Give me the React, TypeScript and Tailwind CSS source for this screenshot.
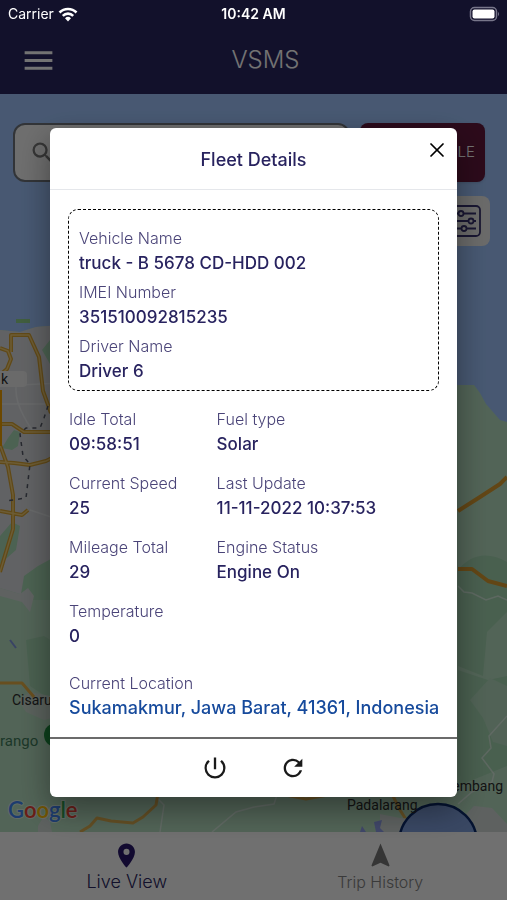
import React from 'react';
import { X } from 'lucide-react';
import { MdLocationOn, MdMenu, MdNavigation, MdPowerSettingsNew, MdRefresh, MdSearch } from 'react-icons/md';

const vehicle = [
  { label: 'Vehicle Name', value: 'truck - B 5678 CD-HDD 002' },
  { label: 'IMEI Number', value: '351510092815235' },
  { label: 'Driver Name', value: 'Driver 6' },
];

const details = [
  { label: 'Idle Total', value: '09:58:51' },
  { label: 'Fuel type', value: 'Solar' },
  { label: 'Current Speed', value: '25' },
  { label: 'Last Update', value: '11-11-2022 10:37:53' },
  { label: 'Mileage Total', value: '29' },
  { label: 'Engine Status', value: 'Engine On' },
  { label: 'Temperature', value: '0' },
];

const Field: React.FC<{ label: string; value: string }> = ({ label, value }) => (
  <div>
    <dt className="text-base leading-6 font-light text-[#4a4478]">{label}</dt>
    <dd className="text-[17px] leading-[26px] font-medium text-[#28235f] whitespace-nowrap">{value}</dd>
  </div>
);

const StatusBar: React.FC = () => (
  <div className="relative z-20 h-7 px-2 grid grid-cols-3 items-center text-sm text-white">
    <div className="flex items-center gap-1">
      <span>Carrier</span>
      <svg width="20" height="15" viewBox="0 0 20 15" fill="none" stroke="#fff" strokeWidth="2.600" aria-label="Wi-Fi">
        <path d="M1.500 5.500a12 12 0 0 1 17 0M4.800 8.800a7.400 7.400 0 0 1 10.400 0" />
        <path d="M10 14.500l-3-3.200a4.300 4.300 0 0 1 6 0z" fill="#fff" stroke="none" />
      </svg>
    </div>
    <span className="text-center font-semibold">10:42 AM</span>
    <svg className="justify-self-end" width="32" height="16" viewBox="0 0 32 16" aria-label="Battery">
      <rect x="3.500" y="1.500" width="26" height="13" rx="4" fill="none" stroke="#77768a" strokeWidth="1.500" />
      <rect x="5.500" y="3.500" width="22" height="9" rx="2" fill="#fff" />
      <path d="M31 6c1.300 .8 1.300 3.200 0 4z" fill="#77768a" />
    </svg>
  </div>
);

const MapView: React.FC = () => (
  <svg
    className="absolute inset-0 w-full h-full"
    viewBox="0 94 507 738"
    preserveAspectRatio="xMidYMid slice"
    fontFamily="Roboto, sans-serif"
  >
    <rect y="94" width="507" height="738" fill="#9fc4fc" />
    {/* land */}
    <path d="M0 330L20 332 36 327 60 325 200 350 440 385 474 385 480 393 486 404 500 420 507 422V832H0z" fill="#b6dec1" />
    <path d="M0 330L20 332 36 327 60 325V560L44 580 32 600 20 594 0 588z" fill="#d8dade" />
    <path d="M42 350l8-10v24zM8 438l6-8 6 2-2 14-6 4-10-2zM0 536l12-14 8 4-4 24-16 14zM24 576l14-10 22-12v46H20z" fill="#a8dab5" />
    <path d="M0 588l20 6 8-6 6 8-4 16-8-10-22-6z" fill="#d2d9d8" />
    <path d="M26 640l18-4 16 10v60l-30-20z" fill="#a5d6b2" />
    <path d="M458 570q20-24 49-8v50l-20 20-4 44-25-10zM458 670l30 10 19-4v90l-49 20z" fill="#a3d4b0" />
    <path d="M470 700l20-22 17 8v60l-14-4-10-24z" fill="#b3dabe" />
    <path d="M18 700l12-8 20 4 10 20-16 4-18-8z" fill="#c8d8cd" />
    <path d="M16 319h14v4h-14z" fill="#8fd08c" />
    {/* minor roads */}
    <g fill="none" stroke="#f3f5f6" strokeWidth="1.500" opacity=".55">
      <path d="M0 386l60-3M0 404h60M20 372c-10 20 0 40 12 58M30 510l30 10M458 586l6 6 8 1 14 7 12-4 9 4M507 716l-18 20 2 12-9 10 12 16-2 8-20 10-14 12" />
      <path d="M156 797l8 8-4 27M212 832l24-20 18-5 20-3 4-12" />
    </g>
    {/* highways */}
    <g fill="none" strokeLinejoin="round">
      <g stroke="#d6a233" strokeWidth="4">
        <path d="M0 348l8 3 3 8-4 10-7 6M11 352V335H29l10 22 4 34 8 22M0 424h12l12 8h36M0 445l8 22 5 28v34L0 572M0 462l14 1 16 2 16-4 14-7M0 511l22 4 6-5" />
      </g>
      <g stroke="#f0cc75" strokeWidth="1.500">
        <path d="M0 348l8 3 3 8-4 10-7 6M11 352V335H29l10 22 4 34 8 22M0 424h12l12 8h36M0 445l8 22 5 28v34L0 572M0 462l14 1 16 2 16-4 14-7M0 511l22 4 6-5" />
      </g>
      <path d="M0 390v56" stroke="#f0a100" strokeWidth="4" />
      <path d="M0 683h22l12 14" stroke="#e5ae45" strokeWidth="3" />
      <path d="M458 511l22-14 20-13 7-7M458 569h14l16 12 19 5" stroke="#d99b30" strokeWidth="4" />
      <path d="M80 832l10-6 7-8 14 3 22 2 10-6 13-12 2-12M280 794l26 5 22-4M390 790l10 20 14 22" stroke="#dcae50" strokeWidth="3" />
      <path d="M48 406l-4 12-4 10-14 0-6 6 3 22 7 8-4 34-20 3" stroke="#555a68" strokeWidth="1.500" strokeDasharray="4 5" />
    </g>
    <path d="M380 814l20 4 28 2 12 12h-60zM460 820l14-14 18 2 15 16v8h-47zM38 826l6-10 6 6 2 10h-14z" fill="#d0d8d5" />
    <path d="M362 826l4 6h-6zM374 822l8-2-2 8 4 4h-8z" fill="#8e9de8" />
    <path d="M10 640l6 8" stroke="#7f95dd" strokeWidth="2" />
    <circle cx="438" cy="843" r="39" fill="#7f9fdc" stroke="#0a2a6c" strokeWidth="2.500" />
    <circle cx="56" cy="735" r="12" fill="#1d8f3f" />
    {/* place names */}
    <rect x="-8" y="371" width="35" height="16" rx="4" fill="#ececec" />
    <g fill="#2c2c2c" fontSize="14">
      <text x="1" y="384">k</text>
      <text x="12" y="705">Cisarua</text>
      <text x="503" y="791" textAnchor="end">Lembang</text>
      <text x="347" y="810">Padalarang</text>
      <text x="0" y="746" fill="#3f7a5a" fontSize="15">rango</text>
    </g>
    <text x="8" y="818" fontSize="22" fontWeight="600" fontFamily="Lato, sans-serif" stroke="#fff" strokeOpacity=".5" strokeWidth="2" paintOrder="stroke">
      <tspan fill="#4285f4">G</tspan>
      <tspan fill="#ea4335">o</tspan>
      <tspan fill="#fbbc05">o</tspan>
      <tspan fill="#4285f4">g</tspan>
      <tspan fill="#34a853">l</tspan>
      <tspan fill="#ea4335">e</tspan>
    </text>
  </svg>
);

const FilterIcon: React.FC = () => (
  <svg width="34" height="32" viewBox="0 0 34 32" fill="none" stroke="#37326f" strokeWidth="1.800">
    <rect x="1" y="1" width="31" height="30" rx="4" />
    <path d="M5 8.500h5M16 8.500h12M5 16h15M26 16h2M5 23.500h8M19 23.500h9" />
    <circle cx="13" cy="8.500" r="2.500" />
    <circle cx="23" cy="16" r="2.500" />
    <circle cx="16" cy="23.500" r="2.500" />
  </svg>
);

const FleetDetails: React.FC = () => (
  <div className="fixed inset-0 z-10 pt-[25px] px-[50px] bg-black/55 flex items-center justify-center">
    <div
      role="dialog"
      aria-labelledby="fleet-title"
      className="w-full max-w-lg rounded-md bg-white shadow-[0_12px_32px_rgba(0,0,0,0.4)]"
    >
      <div className="relative h-[62px] pt-0.5 flex items-center justify-center border-b border-gray-200">
        <h2 id="fleet-title" className="text-lg font-medium text-[#28235f]">Fleet Details</h2>
        <button type="button" aria-label="Close" className="absolute top-[10px] right-2 text-black">
          <X size={24} strokeWidth={1.7} />
        </button>
      </div>

      <div className="px-[18px] pt-[19px] pb-4">
        <dl className="flex flex-col gap-1 px-[10px] pt-4 pb-1.5 border border-dashed border-black rounded-[10px]">
          {vehicle.map((item) => (
            <Field key={item.label} {...item} />
          ))}
        </dl>
        <dl className="mt-4 px-px grid grid-cols-[2fr_3fr] gap-y-[14px]">
          {details.map((item) => (
            <Field key={item.label} {...item} />
          ))}
        </dl>
        <div className="mt-[22px] px-px">
          <p className="text-base leading-6 font-light text-[#4a4478]">Current Location</p>
          <a href="#location" className="block text-lg leading-[26px] font-medium whitespace-nowrap text-[#164a9c]">
            Sukamakmur, Jawa Barat, 41361, Indonesia
          </a>
        </div>
      </div>

      <div className="h-[60px] flex items-center justify-center gap-[50px] border-t-2 border-[#6b6b6b] text-[#1a1a1a]">
        <button type="button" aria-label="Power"><MdPowerSettingsNew size={28} /></button>
        <button type="button" aria-label="Refresh"><MdRefresh size={28} /></button>
      </div>
    </div>
  </div>
);

const App: React.FC = () => {
  return (
    <div className="min-h-screen flex flex-col font-[Inter,sans-serif]">
      <header className="bg-[#28265f]">
        <StatusBar />
        <div className="h-[66px] px-5 pb-0.5 grid grid-cols-[1fr_auto_1fr] items-center text-white">
          <button type="button" aria-label="Menu" className="justify-self-start"><MdMenu size={37} /></button>
          <h1 className="pl-6 text-2xl font-light">VSMS</h1>
        </div>
      </header>

      <main className="relative flex-1">
        <MapView />
        <div className="relative pt-[29px] pl-[13px] pr-[22px] flex gap-[10px]">
          <label className="flex-1 min-w-0 h-[59px] pl-3.5 flex items-center gap-2 bg-[#f4f4f4] border-2 border-[#6f747c] rounded-xl">
            <MdSearch size={28} className="shrink-0 text-[#777]" />
            <input type="search" aria-label="Search vehicle" className="w-full min-w-0 outline-none" />
          </label>
          <button type="button" className="w-[125px] h-[59px] pr-[10px] text-right rounded-lg bg-[#62183c] text-[15px] font-light text-white shadow">
            VEHICLE
          </button>
        </div>
        <div className="relative mt-[14px] pr-[17px] flex justify-end">
          <button type="button" aria-label="Filter" className="size-[50px] flex items-center justify-center rounded-lg bg-[#ececea]">
            <FilterIcon />
          </button>
        </div>
      </main>

      <nav className="relative h-[68px] grid grid-cols-2 bg-[#f8f8f8]">
        <a href="#live" className="pt-[9px] flex flex-col items-center text-lg leading-6 font-light text-[#28265f]">
          <MdLocationOn size={29} className="text-[#28186a]" />
          Live View
        </a>
        <a href="#history" className="pt-[9px] flex flex-col items-center text-base leading-6 font-light text-[#808080]">
          <MdNavigation size={29} className="text-[#777]" />
          Trip History
        </a>
      </nav>

      <FleetDetails />
    </div>
  );
};

export default App;
